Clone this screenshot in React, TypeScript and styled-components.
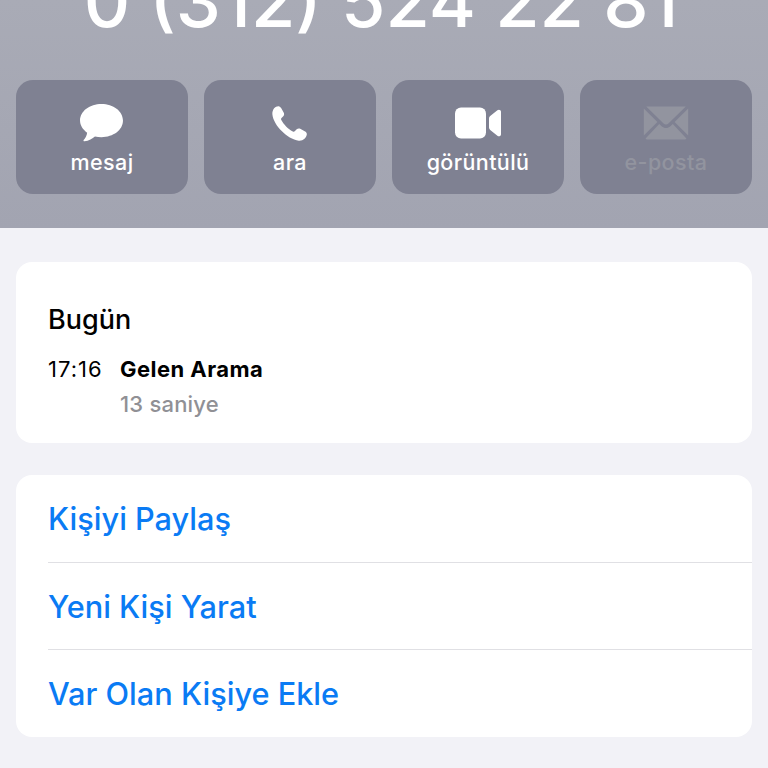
import styled, { createGlobalStyle } from 'styled-components';

const GlobalStyle = createGlobalStyle`
    html, body {
        margin: 0;
        padding: 0;
        background: #f2f2f7;
    }
    body {
        font-family: Inter, "Noto Sans", sans-serif;
        width: 768px;
        height: 768px;
        overflow: hidden;
    }
`;

const MessageIcon = () => (
    <svg width="45" height="41" viewBox="0 0 46 42" fill="currentColor">
        <path d="M23 1C35 1 45 8.2 45 18C45 27.8 35 35 23 35C20.6 35 18.4 34.7 16.3 34.2C13.8 36.4 10 38.6 5.6 39.2C4.6 39.3 4.2 38.3 4.9 37.6C6.4 36 8 33.2 8.3 30.4C3.8 27.2 1 22.9 1 18C1 8.2 11 1 23 1Z" />
    </svg>
);

const PhoneIcon = () => (
    <svg width="37" height="37" viewBox="0 0 38 38" fill="currentColor">
        <path d="M3.2 3.4C4.4 2 6.4 1 7.8 1.2C9 1.4 9.8 2.2 10.4 3.2L13 7.8C13.8 9.2 13.6 10.6 12.6 11.6L10.8 13.4C10.2 14 10.2 14.6 10.6 15.4C12.8 19.6 17.6 24.8 22.4 27.2C23.2 27.6 23.8 27.6 24.4 27L26.4 25C27.4 24 28.8 23.8 30 24.4L34.6 27C36 27.8 36.8 28.8 36.8 30C36.8 31.4 35.8 33.4 34.4 34.6C32.8 36 30.8 36.8 28.6 36.6C22.4 36 15.8 31.8 11 26.8C6 21.6 2 15.4 1.4 9.4C1.2 7 2 5 3.2 3.4Z" />
    </svg>
);

const VideoIcon = () => (
    <svg width="46" height="32" viewBox="0 0 46 32" fill="currentColor">
        <rect x="0" y="0.5" width="31" height="31" rx="6" />
        <path d="M34 11.5C34 10.5 34.4 9.8 35.2 9.1L42.4 3.2C43.8 2 46 2.8 46 4.8V27.2C46 29.2 43.8 30 42.4 28.8L35.2 22.9C34.4 22.2 34 21.5 34 20.5Z" />
    </svg>
);

const MailIcon = () => (
    <svg width="46" height="34" viewBox="0 0 46 34" fill="currentColor">
        <path d="M3.2 0.6H42.8L25.4 17.4C24 18.8 22 18.8 20.6 17.4Z" />
        <path d="M0.8 2.6L14.4 16L0.8 29.6Z" />
        <path d="M45.2 2.6V29.6L31.6 16Z" />
        <path d="M2.6 32.4L16.2 18L18.6 20.2C21.2 22.6 24.8 22.6 27.4 20.2L29.8 18L43.4 32.4C43 33 42.4 33.4 41.4 33.4H4.6C3.6 33.4 3 33 2.6 32.4Z" />
    </svg>
);

const actions = [
    { label: 'mesaj', icon: <MessageIcon />, disabled: false },
    { label: 'ara', icon: <PhoneIcon />, disabled: false },
    { label: 'görüntülü', icon: <VideoIcon />, disabled: false },
    { label: 'e-posta', icon: <MailIcon />, disabled: true },
];

const links = ['Kişiyi Paylaş', 'Yeni Kişi Yarat', 'Var Olan Kişiye Ekle'];

const App = () => {
    return (
        <Page>
            <GlobalStyle />
            <Header>
                <PhoneNumber>0 (312) 524 22 81</PhoneNumber>
                <Actions>
                    {actions.map((action) => (
                        <ActionButton key={action.label} $disabled={action.disabled}>
                            <IconSlot>{action.icon}</IconSlot>
                            <ActionLabel>{action.label}</ActionLabel>
                        </ActionButton>
                    ))}
                </Actions>
            </Header>
            <Content>
                <HistoryCard>
                    <DayTitle>Bugün</DayTitle>
                    <CallRow>
                        <CallTime>17:16</CallTime>
                        <CallInfo>
                            <CallType>Gelen Arama</CallType>
                            <CallDuration>13 saniye</CallDuration>
                        </CallInfo>
                    </CallRow>
                </HistoryCard>
                <LinksCard>
                    {links.map((link) => (
                        <LinkRow key={link}>{link}</LinkRow>
                    ))}
                </LinksCard>
            </Content>
        </Page>
    );
};

export default App;

const Page = styled.div`
    width: 768px;
    height: 768px;
    overflow: hidden;
    background: #f2f2f7;
`;

const Header = styled.header`
    height: 228px;
    box-sizing: border-box;
    padding: 0 16px;
    overflow: hidden;
    background: linear-gradient(180deg, #a9abb6 0%, #a2a4b1 100%);
`;

const PhoneNumber = styled.h1`
    margin: -38px 0 0;
    padding-right: 6px;
    height: 118px;
    line-height: 78px;
    text-align: center;
    color: #ffffff;
    font-size: 72px;
    font-weight: 500;
    white-space: nowrap;
`;

const Actions = styled.div`
    display: grid;
    grid-template-columns: repeat(4, 172px);
    gap: 16px;
`;

const ActionButton = styled.div<{ $disabled: boolean }>`
    height: 114px;
    border-radius: 17px;
    background: #7f8192;
    color: ${({ $disabled }) => ($disabled ? '#92949f' : '#ffffff')};
    display: flex;
    flex-direction: column;
    align-items: center;
`;

const IconSlot = styled.div`
    height: 44px;
    margin-top: 21px;
    padding-right: 1px;
    display: flex;
    align-items: center;
    justify-content: center;
`;

const ActionLabel = styled.span`
    margin-top: 4px;
    font-size: 21.5px;
    line-height: 26px;
    letter-spacing: 0.4px;
    font-weight: 500;
`;

const Content = styled.main`
    padding: 34px 16px 0;
    display: flex;
    flex-direction: column;
    gap: 32px;
`;

const Card = styled.section`
    background: #ffffff;
    border-radius: 16px;
`;

const HistoryCard = styled(Card)`
    height: 181px;
    box-sizing: border-box;
    padding: 41px 32px 0;
`;

const DayTitle = styled.h2`
    margin: 0;
    font-size: 27px;
    line-height: 34px;
    font-weight: 500;
    color: #000000;
`;

const CallRow = styled.div`
    display: flex;
    margin-top: 18px;
`;

const CallTime = styled.span`
    width: 72px;
    font-size: 22px;
    line-height: 28px;
    letter-spacing: 1px;
    color: #000000;
`;

const CallInfo = styled.div`
    display: flex;
    flex-direction: column;
    gap: 7px;
`;

const CallType = styled.span`
    font-size: 22px;
    line-height: 28px;
    letter-spacing: 0.45px;
    font-weight: 700;
    color: #000000;
`;

const CallDuration = styled.span`
    font-size: 22px;
    line-height: 28px;
    letter-spacing: 0.2px;
    font-weight: 500;
    color: #909095;
`;

const LinksCard = styled(Card)`
    height: 262px;
    padding-left: 32px;
    display: flex;
    flex-direction: column;
`;

const LinkRow = styled.div`
    flex: 1;
    display: flex;
    align-items: center;
    font-size: 30.7px;
    font-weight: 500;
    color: #0a7bf4;

    & + & {
        border-top: 1px solid #e0e0e4;
    }
`;
